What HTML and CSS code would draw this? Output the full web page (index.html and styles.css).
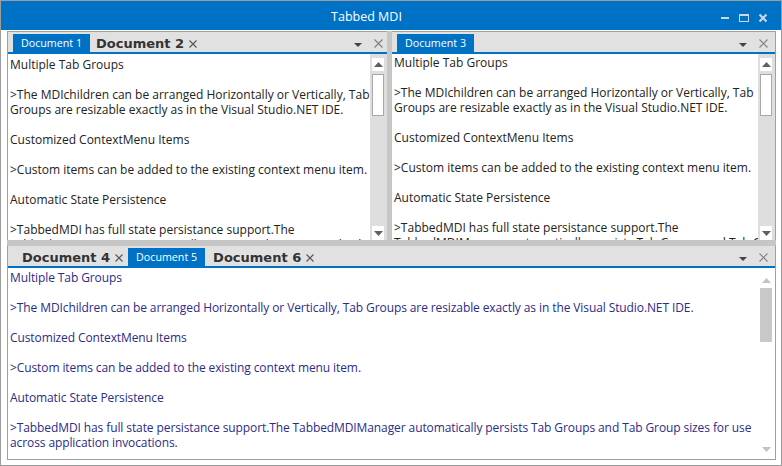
FILE: index.html
```html
<!DOCTYPE html>
<html>
<head>
<meta charset="utf-8">
<link rel="stylesheet" href="styles.css">
</head>
<body>
<div class="window">
  <div class="titlebar">
    <span class="title">Tabbed MDI</span>
    <svg class="controls" width="75" height="29" viewBox="0 0 75 29">
      <rect x="15" y="16" width="8" height="2" fill="#cdd8e4"/>
      <rect x="33.5" y="13.5" width="9" height="7" fill="none" stroke="#cdd8e4" stroke-width="1"/>
      <rect x="33" y="13" width="10" height="2" fill="#cdd8e4"/>
      <path d="M53.5 13.5 L60.5 20.5 M60.5 13.5 L53.5 20.5" stroke="#cdd8e4" stroke-width="2"/>
    </svg>
  </div>
  <div class="client">
    <div class="top-row">
      <div class="pane pane-a">
        <div class="strip">
          <div class="tab active">Document 1</div>
          <div class="tab inactive">Document 2<svg class="x" width="8" height="8" viewBox="0 0 8 8"><path d="M0.5 0.5 L7.5 7.5 M7.5 0.5 L0.5 7.5" stroke="#555" stroke-width="1.1"/></svg></div>
          <svg class="tools tools-a" width="30" height="20" viewBox="0 0 30 20"><polygon points="0,11 8,11 4,15" fill="#444"/><path d="M20.5 7.5 L28.5 15.5 M28.5 7.5 L20.5 15.5" stroke="#808080" stroke-width="1.1"/></svg>
        </div>
        <div class="pane-body">
          <div class="text t-a">
            <p>Multiple Tab Groups</p>
            <p>&gt;The MDIchildren can be arranged Horizontally or Vertically, Tab<br>Groups are resizable exactly as in the Visual Studio.NET IDE.</p>
            <p>Customized ContextMenu Items</p>
            <p>&gt;Custom items can be added to the existing context menu item.</p>
            <p>Automatic State Persistence</p>
            <p>&gt;TabbedMDI has full state persistance support.The<br>TabbedMDIManager automatically persists Tab Groups and Tab Group sizes for use across application invocations.</p>
          </div>
          <div class="vscroll">
            <div class="sbtn up"><svg width="9" height="5" viewBox="0 0 9 5"><polygon points="0,5 9,5 4.5,0" fill="#606060"/></svg></div>
            <div class="thumb"></div>
            <div class="sbtn down"><svg width="9" height="5" viewBox="0 0 9 5"><polygon points="0,0 9,0 4.5,5" fill="#606060"/></svg></div>
          </div>
        </div>
      </div>
      <div class="vsplit"></div>
      <div class="pane pane-b">
        <div class="strip">
          <div class="tab active">Document 3</div>
          <svg class="tools" width="30" height="20" viewBox="0 0 30 20"><polygon points="0,11 8,11 4,15" fill="#444"/><path d="M20.5 7.5 L28.5 15.5 M28.5 7.5 L20.5 15.5" stroke="#808080" stroke-width="1.1"/></svg>
        </div>
        <div class="pane-body">
          <div class="text t-b">
            <p>Multiple Tab Groups</p>
            <p>&gt;The MDIchildren can be arranged Horizontally or Vertically, Tab<br>Groups are resizable exactly as in the Visual Studio.NET IDE.</p>
            <p>Customized ContextMenu Items</p>
            <p>&gt;Custom items can be added to the existing context menu item.</p>
            <p>Automatic State Persistence</p>
            <p>&gt;TabbedMDI has full state persistance support.The<br>TabbedMDIManager automatically persists Tab Groups and Tab Group sizes for use across application invocations.</p>
          </div>
          <div class="vscroll">
            <div class="sbtn up"><svg width="9" height="5" viewBox="0 0 9 5"><polygon points="0,5 9,5 4.5,0" fill="#606060"/></svg></div>
            <div class="thumb"></div>
            <div class="sbtn down"><svg width="9" height="5" viewBox="0 0 9 5"><polygon points="0,0 9,0 4.5,5" fill="#606060"/></svg></div>
          </div>
        </div>
      </div>
    </div>
    <div class="hsplit"></div>
    <div class="pane pane-c">
      <div class="strip strip-c">
        <div class="tab inactive first">Document 4<svg class="x" width="8" height="8" viewBox="0 0 8 8"><path d="M0.5 0.5 L7.5 7.5 M7.5 0.5 L0.5 7.5" stroke="#555" stroke-width="1.1"/></svg></div>
        <div class="tab active">Document 5</div>
        <div class="tab inactive after">Document 6<svg class="x" width="8" height="8" viewBox="0 0 8 8"><path d="M0.5 0.5 L7.5 7.5 M7.5 0.5 L0.5 7.5" stroke="#555" stroke-width="1.1"/></svg></div>
        <svg class="tools" width="30" height="20" viewBox="0 0 30 20"><polygon points="0,11 8,11 4,15" fill="#444"/><path d="M20.5 7.5 L28.5 15.5 M28.5 7.5 L20.5 15.5" stroke="#808080" stroke-width="1.1"/></svg>
      </div>
      <div class="pane-body">
        <div class="text t-c">
          <p>Multiple Tab Groups</p>
          <p>&gt;The MDIchildren can be arranged Horizontally or Vertically, Tab Groups are resizable exactly as in the Visual Studio.NET IDE.</p>
          <p>Customized ContextMenu Items</p>
          <p>&gt;Custom items can be added to the existing context menu item.</p>
          <p>Automatic State Persistence</p>
          <p>&gt;TabbedMDI has full state persistance support.The TabbedMDIManager automatically persists Tab Groups and Tab Group sizes for use<br>across application invocations.</p>
        </div>
        <div class="vscroll flat">
          <div class="sbtn up"><svg width="9" height="5" viewBox="0 0 9 5"><polygon points="0,5 9,5 4.5,0" fill="#c2c2c2"/></svg></div>
          <div class="thumb"></div>
          <div class="sbtn down"><svg width="9" height="5" viewBox="0 0 9 5"><polygon points="0,0 9,0 4.5,5" fill="#c2c2c2"/></svg></div>
        </div>
      </div>
    </div>
  </div>
</div>
</body>
</html>
```
FILE: styles.css
```css
* { box-sizing: border-box; }
body { margin: 0; font-family: "Open Sans", "Noto Sans", sans-serif; background: #fff; }

.window {
  width: 782px; height: 466px;
  border: 1px solid #9d9d9d;
  display: flex; flex-direction: column;
  background: #fff;
}
.titlebar {
  height: 29px; flex: none;
  background: #0072c6;
  display: flex; align-items: center;
}
.title {
  flex: 1; text-align: center;
  padding-left: 26px;
  color: #fff; font-size: 12.5px;
  line-height: 29px;
  padding-top: 1px;
}
.controls { flex: none; display: block; }

.client {
  flex: 1; min-height: 0;
  padding: 1px 5px 5px 6px;
  display: flex; flex-direction: column;
}
.top-row { height: 209px; flex: none; display: flex; }
.pane { display: flex; flex-direction: column; background: #fff; min-width: 0; }
.pane-a { width: 380px; flex: none; border-left: 1px solid #a0a0a0; border-top: 1px solid #a0a0a0; }
.vsplit { width: 5px; flex: none; background: #c6c6c6; }
.pane-b { flex: 1; border-top: 1px solid #a0a0a0; border-right: 1px solid #a0a0a0; }
.hsplit { height: 5px; flex: none; background: #c6c6c6; }
.pane-c { flex: 1; min-height: 0; border: 1px solid #a0a0a0; border-top-color: #c6c6c6; }

.strip {
  height: 22px; flex: none;
  background: #e1e1e1;
  border-bottom: 2px solid #0072c6;
  display: flex; align-items: flex-end;
  padding-left: 5px;
}
.tab { height: 18px; display: flex; align-items: center; white-space: nowrap; }
.tab.active {
  background: #0072c6; color: #fff;
  font-size: 10.7px; padding: 0 8px;
}
.tab.inactive {
  font-family: "DejaVu Sans", sans-serif; font-weight: bold; font-size: 13px;
  color: #333; padding: 1px 5px 0 6px; gap: 5px;
}
.tab.inactive.first { padding-left: 9px; }
.tab.inactive.after { padding-left: 8px; }
.tab .x { display: block; margin-top: 1px; }
.tools { margin-left: auto; align-self: flex-start; margin-right: 6px; display: block; }
.tools-a { margin-right: 3px; }

.pane-body { flex: 1; min-height: 0; display: flex; }
.text {
  flex: 1; min-width: 0;
  font-size: 12px; line-height: 15px;
  color: #222;
  white-space: nowrap; overflow: hidden;
  padding: 3px 0 0 2px;
}
.text p { margin: 0 0 15px; }
.t-b { padding-top: 1px; padding-left: 2px; }
.t-c { padding-top: 2px; color: #2c2c84; letter-spacing: -0.1px; }

.vscroll {
  width: 17px; flex: none;
  background: #dedede;
  display: flex; flex-direction: column;
  padding: 4px 3px 0 2px;
}
.sbtn {
  height: 13px; background: #fff;
  display: flex; align-items: center; justify-content: center;
}
.sbtn svg { display: block; }
.thumb { height: 42px; margin-top: 3px; background: #fff; border: 1px solid #a8a8a8; }
.sbtn.down { margin-top: auto; height: 14px; }

.vscroll.flat { background: #fff; padding: 8px 3px 6px 2px; }
.vscroll.flat .sbtn { height: 8px; }
.vscroll.flat .thumb { background: #c8c8c8; border: none; height: 54px; margin-top: 4px; }
```
